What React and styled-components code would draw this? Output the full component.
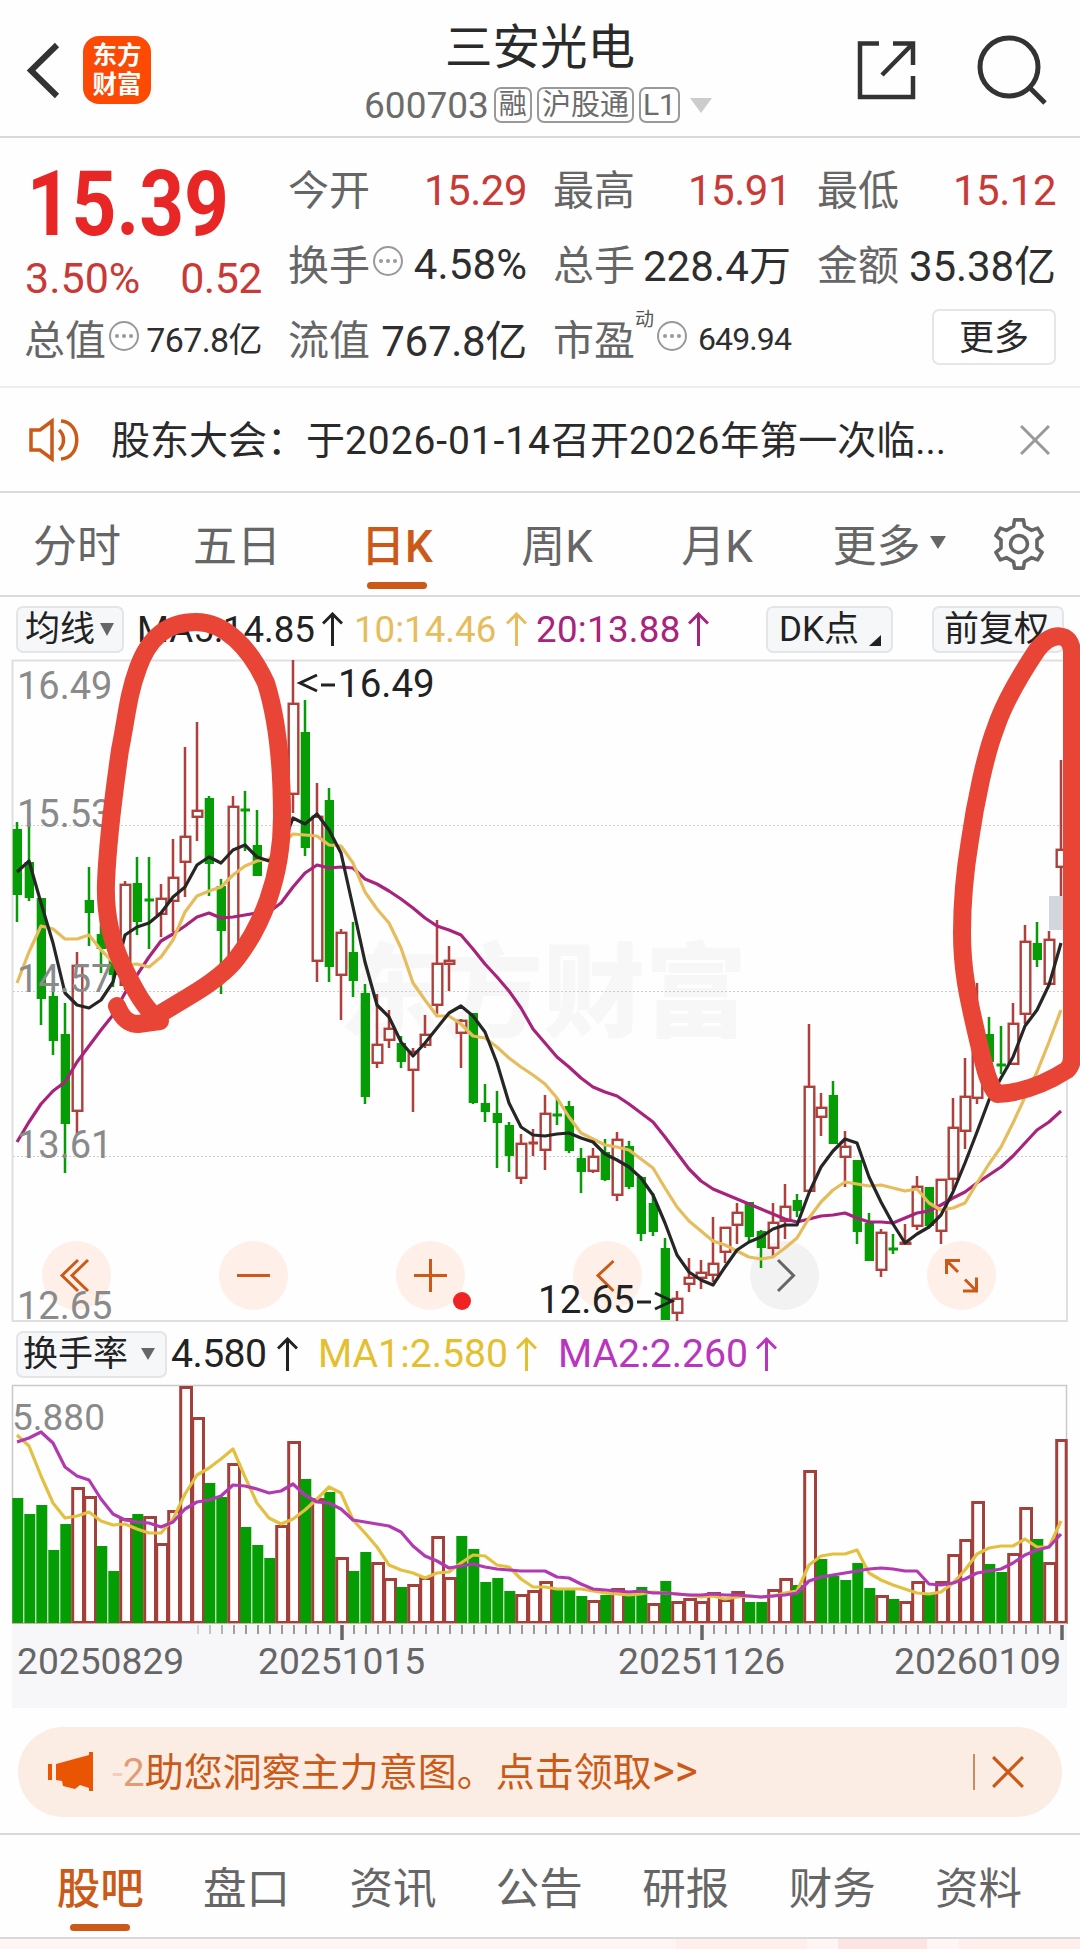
import React from "react";
import styled, { createGlobalStyle } from "styled-components";

const GlobalStyle = createGlobalStyle`
  * { box-sizing: border-box; }
  body {
    margin: 0;
    background: #fefefe;
    font-family: Roboto, "Noto Sans CJK SC", sans-serif;
    color: #2a2a2a;
  }
`;

const ORANGE = "#cb5a18";
const UP = "#ae3f3a";
const DOWN = "#069c06";

const Page = styled.div`
  position: relative;
  width: 1080px;
  height: 1949px;
  overflow: hidden;
  display: flex;
  flex-direction: column;
  white-space: nowrap;
`;

/* ---------- header ---------- */

const Header = styled.header`
  height: 138px;
  border-bottom: 2px solid #d9d9d9;
  display: grid;
  grid-template-columns: 300px 1fr 300px;
`;

const HeaderSide = styled.div`
  display: flex;
  align-items: center;
  height: 140px;
  justify-content: ${({ right }) => (right ? "flex-end" : "flex-start")};
  padding: ${({ right }) => (right ? "0 31px 0 0" : "0 0 0 25px")};
  gap: ${({ right }) => (right ? "59px" : "21px")};
`;

const Logo = styled.div`
  width: 68px;
  height: 68px;
  border-radius: 16px;
  background: #fc4a05;
  color: #fff;
  font: 700 24.5px/29px "Noto Sans CJK SC", sans-serif;
  text-align: center;
  padding-top: 3px;
`;

const TitleBlock = styled.div`
  display: flex;
  flex-direction: column;
  align-items: center;
`;

const Title = styled.h1`
  margin: 22px 0 0;
  font-size: 47.5px;
  line-height: 52px;
  font-weight: 400;
`;

const SubTitle = styled.div`
  display: flex;
  align-items: center;
  gap: 5px;
  margin: 13px 0 0 -4px;
  height: 36px;
  font-size: 37px;
  color: #6c6c6c;
`;

const Tag = styled.span`
  height: 36px;
  line-height: 32px;
  padding: 0 ${({ px }) => px || 3}px;
  border: 2px solid #999;
  border-radius: 7px;
  font-size: ${({ size }) => size || 29}px;
`;

const Triangle = styled.span`
  width: 0;
  height: 0;
  margin-left: ${({ ml }) => ml || 0}px;
  border-left: ${({ w }) => w / 2}px solid transparent;
  border-right: ${({ w }) => w / 2}px solid transparent;
  border-top: ${({ h }) => h}px solid ${({ color }) => color || "#666"};
`;

/* ---------- quote ---------- */

const Quote = styled.section`
  height: 250px;
  border-bottom: 2px solid #eee;
  display: grid;
  grid-template-columns: 237px 238px 237px 238px;
  grid-template-rows: 75px 75px 75px;
  column-gap: 27px;
  padding: 14px 0 0 25px;
`;

const PriceCell = styled.div`
  grid-row: span 2;
  color: #e82626;
`;

const Price = styled.div`
  height: 95px;
  font-size: 91px;
  line-height: 104px;
  font-weight: 700;
  padding-left: 2px;
  transform: scaleX(0.86);
  transform-origin: left;
`;

const Change = styled.div`
  display: flex;
  justify-content: space-between;
  font-size: 43px;
  line-height: 62px;
  letter-spacing: -0.5px;
  color: #c93a37;

  span:first-child { letter-spacing: 0; }
`;

const Cell = styled.div`
  display: flex;
  align-items: center;
  height: 75px;
`;

const Label = styled.span`
  font-size: 41px;
  margin: -6px 0 0 -1px;
  color: #666;
`;

const Value = styled.span`
  margin-left: auto;
  margin-top: ${({ mt }) => mt || 0}px;
  font-size: ${({ size }) => size || 41}px;
  letter-spacing: ${({ ls }) => ls || -0.5}px;
  color: ${({ up }) => (up ? "#c93a37" : "#2e2e2e")};
`;

const Dots = styled.span`
  width: 30px;
  height: 30px;
  margin: -8px 0 0 3px;
  border: 2px solid #999;
  border-radius: 50%;
  display: flex;
  align-items: center;
  justify-content: center;
  gap: 3px;

  i {
    width: 4px;
    height: 4px;
    border-radius: 50%;
    background: #999;
  }
`;

const Sup = styled.sup`
  font-size: 19px;
  line-height: 20px;
  margin-top: -40px;
  color: #555;
`;

const MoreButton = styled.button`
  margin: -6px 0 0 auto;
  width: 124px;
  height: 56px;
  border: 2px solid #e6e6e6;
  border-radius: 7px;
  background: #fff;
  font: 35px/46px "Noto Sans CJK SC", sans-serif;
  color: #2a2a2a;
  padding: 0 0 3px;
`;

/* ---------- notice + period tabs ---------- */

const Notice = styled.div`
  height: 105px;
  border-bottom: 2px solid #dcdcdc;
  display: flex;
  align-items: center;
  padding: 0 30px 0 28px;
  font-size: 39px;
`;

const NoticeText = styled.span`
  flex: 1;
  margin: -6px 0 0 30px;

  b {
    font-weight: 400;
    letter-spacing: 0.9px;
  }
`;

const Tabs = styled.nav`
  height: 104px;
  margin-left: -3px;
  border-bottom: 2px solid #dcdcdc;
  display: grid;
  grid-template-columns: repeat(5, 160px) 184px 76px;
  font-size: 44px;
  color: #666;
`;

const Tab = styled.a`
  height: 102px;
  display: flex;
  align-items: center;
  justify-content: center;
  position: relative;
  gap: 9px;
  padding-bottom: ${({ icon }) => (icon ? 0 : 3)}px;
  color: ${({ active }) => (active ? ORANGE : "#666")};
  font-weight: ${({ active }) => (active ? 500 : 400)};

  &::after {
    content: "";
    display: ${({ active }) => (active ? "block" : "none")};
    position: absolute;
    bottom: 6px;
    width: 60px;
    height: 7px;
    border-radius: 4px;
    background: ${ORANGE};
  }
`;

/* ---------- indicator rows ---------- */

const IndicatorRow = styled.div`
  height: 63px;
  display: flex;
  align-items: center;
  padding: 1px 16px 0;
  font-size: ${({ size }) => size}px;
`;

const Chip = styled.button`
  width: ${({ w }) => w}px;
  height: 47px;
  margin-left: ${({ ml }) => ml || 0}px;
  padding: 0 0 0 ${({ pl }) => pl || 8}px;
  display: flex;
  align-items: center;
  gap: 5px;
  border: 2px solid #e3e5e8;
  border-radius: 7px;
  background: #f5f7f9;
  font: 35px/43px Roboto, "Noto Sans CJK SC", sans-serif;
  color: #222;
`;

const Corner = styled.i`
  align-self: flex-end;
  margin: 0 0 5px 5px;
  border-left: 12px solid transparent;
  border-bottom: 11px solid #222;
`;

const Ma = styled.span`
  display: flex;
  align-items: center;
  width: ${({ w }) => w}px;
  margin-left: ${({ ml }) => ml}px;
  justify-content: space-between;
  letter-spacing: ${({ ls }) => ls || 0}px;
  color: ${({ color }) => color};
`;

const ChartPanel = styled.div`
  position: relative;
  height: ${({ h }) => h}px;

  > svg {
    position: relative;
    display: block;
    overflow: visible;
  }
`;

const Controls = styled.div`
  position: absolute;
  left: 42px;
  top: 581px;
  display: flex;
  gap: 108px;
`;

const Control = styled.button`
  width: 69px;
  height: 69px;
  padding: 0;
  border: 0;
  border-radius: 50%;
  background: ${({ muted }) => (muted ? "#f2f2f2" : "#fef0e9")};

  svg {
    display: block;
    fill: none;
    stroke: ${({ muted }) => (muted ? "#666" : ORANGE)};
    stroke-width: 3;
  }
`;

/* ---------- bottom ---------- */

const Promo = styled.div`
  height: 90px;
  margin: 19px 18px 16px;
  padding: 0 38px 0 30px;
  border-radius: 45px;
  background: #fcede4;
  display: flex;
  align-items: center;
  font-size: 39px;
  color: ${ORANGE};
`;

const PromoText = styled.span`
  flex: 1;
  margin: -6px 0 0 18px;

  span { opacity: 0.55; }
  span:first-child { opacity: 0.2; }

  b {
    font-weight: 400;
    font-size: 44px;
    line-height: 40px;
  }
`;

const PromoDivider = styled.i`
  width: 2px;
  height: 36px;
  margin-right: 17px;
  background: #c98a66;
`;

const BottomTabs = styled.nav`
  height: 106px;
  border-top: 2px solid #d9d9d9;
  border-bottom: 2px solid #d9d9d9;
  padding: 0 27px;
  display: grid;
  grid-template-columns: repeat(7, 146.4px);
  font-size: 43.5px;
`;

const BottomTab = styled(Tab)`
  padding-bottom: 1px;
`;

const HeatStrip = styled.div`
  height: 10px;
  display: grid;
  grid-template-columns: 676px 131px 31px 89px 32px 1fr;
  background: #fff5f4;

  i:nth-child(2), i:nth-child(6) { background: #feeeec; }
  i:nth-child(4) { background: #fbe4e1; }
`;

const Marks = styled.svg`
  position: absolute;
  left: 0;
  top: 0;
  pointer-events: none;
`;

/* ---------- data ---------- */

// [direction, high, body top, body bottom, low]
const candles = [
  ["d", 822, 829, 895, 922], ["d", 822, 862, 898, 901], ["d", 898, 898, 999, 1025], ["d", 988, 996, 1041, 1055],
  ["d", 1003, 1034, 1124, 1173], ["u", 952, 965, 1111, 1134], ["d", 867, 900, 913, 946], ["d", 917, 934, 949, 973],
  ["d", 930, 942, 975, 987], ["u", 881, 884, 985, 990], ["d", 857, 883, 922, 935], ["d", 857, 900, 901, 949],
  ["u", 884, 898, 914, 937], ["u", 839, 877, 901, 932], ["u", 747, 836, 862, 897], ["u", 722, 810, 817, 841],
  ["d", 796, 798, 864, 896], ["d", 879, 886, 931, 994], ["u", 796, 806, 960, 965], ["d", 791, 810, 811, 851],
  ["d", 810, 845, 876, 876], ["u", 885, 888, 900, 905], ["u", 800, 820, 850, 860], ["u", 660, 703, 794, 813],
  ["d", 700, 732, 848, 856], ["u", 783, 816, 961, 982], ["d", 788, 800, 967, 982], ["u", 929, 932, 975, 1020],
  ["d", 922, 952, 981, 997], ["d", 984, 993, 1097, 1104], ["u", 994, 1044, 1063, 1068], ["u", 1010, 1028, 1040, 1048],
  ["d", 1036, 1043, 1062, 1068], ["u", 1048, 1051, 1070, 1112], ["u", 1015, 1034, 1045, 1048], ["u", 920, 963, 1005, 1014],
  ["u", 946, 960, 964, 991], ["u", 1019, 1020, 1033, 1068], ["d", 1013, 1013, 1103, 1104], ["d", 1084, 1103, 1112, 1122],
  ["d", 1091, 1113, 1123, 1168], ["d", 1122, 1125, 1156, 1172], ["u", 1134, 1143, 1178, 1184], ["u", 1129, 1143, 1144, 1156],
  ["u", 1095, 1113, 1150, 1170], ["d", 1098, 1115, 1116, 1125], ["d", 1101, 1106, 1151, 1153], ["d", 1148, 1158, 1172, 1193],
  ["u", 1148, 1156, 1171, 1173], ["d", 1139, 1152, 1180, 1181], ["u", 1132, 1139, 1195, 1201], ["d", 1141, 1146, 1187, 1189],
  ["d", 1176, 1177, 1234, 1241], ["d", 1193, 1203, 1232, 1236], ["d", 1238, 1248, 1320, 1320], ["u", 1291, 1298, 1313, 1321],
  ["u", 1258, 1277, 1284, 1292], ["u", 1260, 1272, 1278, 1289], ["u", 1217, 1263, 1275, 1282], ["u", 1227, 1227, 1252, 1263],
  ["u", 1203, 1212, 1225, 1244], ["d", 1202, 1202, 1237, 1241], ["d", 1230, 1231, 1248, 1268], ["u", 1203, 1222, 1248, 1257],
  ["u", 1184, 1206, 1221, 1239], ["d", 1194, 1200, 1211, 1217], ["u", 1024, 1086, 1191, 1191], ["u", 1093, 1107, 1117, 1136],
  ["d", 1081, 1095, 1144, 1144], ["u", 1131, 1146, 1157, 1187], ["d", 1160, 1160, 1232, 1244], ["d", 1213, 1223, 1261, 1261],
  ["u", 1229, 1232, 1270, 1277], ["d", 1234, 1249, 1250, 1254], ["u", 1224, 1242, 1244, 1245], ["u", 1176, 1186, 1226, 1230],
  ["d", 1187, 1187, 1226, 1226], ["u", 1179, 1179, 1231, 1244], ["u", 1098, 1127, 1179, 1190], ["u", 1058, 1096, 1131, 1149],
  ["u", 983, 1040, 1098, 1104], ["d", 1017, 1034, 1062, 1064], ["d", 1026, 1065, 1066, 1074], ["u", 1003, 1023, 1064, 1064],
  ["u", 925, 941, 1014, 1024], ["d", 922, 943, 960, 967], ["u", 931, 939, 984, 985], ["u", 760, 849, 867, 896],
];

const ma5 = [
  872, 861, 903, 943, 993, 1005, 1008, 1000, 982, 935, 927, 923, 913, 897, 887, 865, 857, 863, 850, 845, 857, 861,
  850, 818, 824, 814, 830, 853, 907, 962, 1005, 1017, 1042, 1056, 1043, 1028, 1013, 1006, 1016, 1032, 1063, 1103,
  1127, 1135, 1136, 1134, 1133, 1138, 1142, 1154, 1160, 1167, 1178, 1195, 1223, 1255, 1272, 1280, 1285, 1267, 1250,
  1242, 1237, 1229, 1225, 1225, 1193, 1167, 1151, 1139, 1143, 1177, 1202, 1224, 1243, 1234, 1227, 1215, 1192, 1163,
  1132, 1100, 1078, 1057, 1026, 1010, 985, 943,
];

const ma10 = [
  983, 952, 926, 929, 939, 939, 935, 950, 962, 965, 964, 967, 957, 940, 912, 896, 891, 887, 875, 866, 861, 859, 845,
  834, 835, 836, 845, 846, 863, 892, 909, 923, 948, 983, 1000, 1016, 1016, 1024, 1036, 1038, 1047, 1058, 1067, 1075,
  1084, 1098, 1117, 1133, 1139, 1145, 1147, 1150, 1159, 1168, 1188, 1207, 1221, 1231, 1241, 1245, 1251, 1257, 1259,
  1257, 1248, 1238, 1218, 1202, 1190, 1182, 1184, 1186, 1185, 1188, 1191, 1189, 1203, 1210, 1208, 1203, 1183, 1164,
  1147, 1123, 1097, 1072, 1042, 1010,
];

const ma20 = [
  1142, 1122, 1104, 1091, 1082, 1062, 1046, 1030, 1015, 993, 975, 957, 941, 934, 926, 917, 913, 918, 917, 915, 913,
  912, 903, 887, 873, 865, 868, 867, 868, 879, 884, 891, 899, 908, 918, 926, 930, 935, 949, 964, 977, 991, 1008, 1029,
  1043, 1057, 1067, 1078, 1087, 1092, 1096, 1104, 1113, 1122, 1137, 1153, 1169, 1181, 1189, 1194, 1199, 1204, 1209,
  1214, 1219, 1222, 1219, 1216, 1215, 1213, 1218, 1222, 1222, 1223, 1218, 1213, 1211, 1205, 1198, 1192, 1183, 1175,
  1167, 1156, 1143, 1130, 1122, 1111,
];

// tops of the turnover bars; direction differs from the candle on a few days
const bars =
  "d1498 d1514 d1505 d1550 d1524 u1487 u1496 d1546 d1571 u1518 d1514 u1516 u1543 u1510 u1386 u1417 d1483 d1497 u1463 d1527 d1545 d1558 u1525 u1441 d1479 u1498 d1492 u1557 d1571 d1552 u1562 u1578 d1587 u1584 u1577 u1536 u1577 d1536 d1549 d1582 d1578 d1591 u1594 u1590 u1581 d1589 d1589 d1596 u1600 d1595 u1588 d1596 d1587 u1603 d1581 u1601 u1598 u1601 u1592 u1599 u1591 d1602 d1602 u1589 u1578 d1585 u1470 d1559 d1576 d1580 d1563 d1588 u1595 d1599 u1601 u1581 d1594 u1581 u1554 u1539 u1501 d1564 d1572 u1553 u1507 d1539 u1562 u1439"
    .split(" ")
    .map((s) => [s[0], Number(s.slice(1))]);

const volMa1 = [
  1435, 1446, 1476, 1503, 1518, 1516, 1512, 1521, 1525, 1524, 1529, 1533, 1533, 1519, 1494, 1475, 1468, 1459, 1449,
  1477, 1503, 1518, 1524, 1519, 1510, 1499, 1487, 1493, 1520, 1533, 1547, 1565, 1570, 1573, 1578, 1573, 1572, 1563,
  1555, 1556, 1565, 1567, 1579, 1587, 1587, 1589, 1589, 1589, 1591, 1593, 1594, 1595, 1594, 1592, 1593, 1594, 1595,
  1597, 1596, 1599, 1597, 1596, 1597, 1596, 1593, 1591, 1565, 1556, 1554, 1554, 1550, 1573, 1580, 1585, 1589, 1593,
  1594, 1592, 1583, 1570, 1554, 1548, 1546, 1546, 1539, 1547, 1547, 1521,
];

const volMa2 = [
  1442, 1438, 1432, 1443, 1467, 1476, 1480, 1499, 1514, 1520, 1522, 1523, 1527, 1522, 1509, 1502, 1500, 1496, 1485,
  1486, 1489, 1493, 1491, 1484, 1495, 1502, 1503, 1509, 1520, 1522, 1524, 1526, 1532, 1546, 1556, 1561, 1568, 1566,
  1564, 1567, 1569, 1570, 1571, 1571, 1571, 1577, 1578, 1584, 1589, 1590, 1591, 1592, 1591, 1593, 1593, 1594, 1595,
  1595, 1594, 1595, 1595, 1596, 1597, 1596, 1595, 1593, 1581, 1577, 1575, 1573, 1571, 1569, 1568, 1569, 1571, 1571,
  1584, 1585, 1583, 1579, 1573, 1571, 1569, 1563, 1555, 1550, 1547, 1534,
];

const xAt = (i) => 17 + i * 12;
const toPoints = (ys) => ys.map((y, i) => `${xAt(i)},${y}`).join(" ");

/* ---------- small drawings ---------- */

const ArrowUp = () => (
  <svg width="21" height="34" viewBox="0 0 21 34" fill="none" stroke="currentColor" strokeWidth="3">
    <path d="M10.5 34V2M1 11.5L10.5 2L20 11.5" />
  </svg>
);

const Close = ({ size, color }) => (
  <svg width={size} height={size} viewBox="0 0 30 30" fill="none" stroke={color} strokeWidth="3">
    <path d="M1 1L29 29M29 1L1 29" />
  </svg>
);

const Info = () => (
  <Dots>
    <i />
    <i />
    <i />
  </Dots>
);

const Line = ({ data, color, width = 3.2 }) => (
  <polyline points={toPoints(data)} fill="none" stroke={color} strokeWidth={width} strokeLinejoin="round" />
);

const Candle = ({ x, data }) => {
  const [dir, high, top, bottom, low] = data;
  const color = dir === "u" ? UP : DOWN;
  const h = bottom - top;
  return (
    <g stroke={color} strokeWidth="2.5" fill="none">
      <path d={`M${x} ${high}V${top}M${x} ${bottom}V${low}`} />
      {h < 2 && <path d={`M${x - 4.5} ${top}H${x + 5}`} strokeWidth="3" />}
      {h >= 2 && dir === "u" && <rect x={x - 4.3} y={top + 0.8} width="9.6" height={Math.max(h - 1, 1)} strokeWidth="2.4" />}
      {h >= 2 && dir === "d" && <rect x={x - 4.3} y={top} width="9.3" height={h} fill={color} stroke="none" />}
    </g>
  );
};

const gear = () => {
  // six wide teeth, one pointing straight up
  const pts = [];
  for (let k = 0; k < 6; k++) {
    const a = (k * Math.PI) / 3 - Math.PI / 2;
    [[-0.3, 18.5], [-0.18, 24.5], [0.18, 24.5], [0.3, 18.5]].forEach(([d, r]) => {
      pts.push(`${(27 + r * Math.cos(a + d)).toFixed(1)},${(27 + r * Math.sin(a + d)).toFixed(1)}`);
    });
  }
  return pts.join(" ");
};

const PriceChart = () => (
  <svg width="1080" height="662" viewBox="0 660 1080 662">
    <path d="M12.5 1321V660.5H1067V1321Z" fill="none" stroke="#dfdfdf" strokeWidth="2" />
    {[825.5, 991.5, 1156.5].map((y) => (
      <path key={y} d={`M13 ${y}H1067`} stroke="#ccc" strokeWidth="1" strokeDasharray="2 2" />
    ))}
    <rect x="1049" y="896" width="14" height="34" fill="#d3d6dc" />
    {candles.map((c, i) => (
      <Candle key={i} x={xAt(i)} data={c} />
    ))}
    <Line data={ma20} color="#a8237b" />
    <Line data={ma10} color="#e6bc5c" />
    <Line data={ma5} color="#262626" />
    <g fontSize="38" fill="#8a8a8a">
      <text x="17" y="699">16.49</text>
      <text x="17" y="827">15.53</text>
      <text x="17" y="992">14.57</text>
      <text x="17" y="1158">13.61</text>
      <text x="17" y="1319">12.65</text>
    </g>
    <g fontSize="38.5" fill="#222">
      <text x="338" y="697">16.49</text>
      <text x="538" y="1313">12.65</text>
    </g>
    <path d="M317 675L300 683L317 691M321 685H335M637 1302H651M655 1293L672 1301L655 1309" fill="none" stroke="#222" strokeWidth="3" />
  </svg>
);

const TurnoverChart = () => (
  <svg width="1080" height="323" viewBox="0 1385 1080 323">
    <path d="M12 1624H1067V1708H12Z" fill="#f7f7fa" />
    <path d="M12.5 1623V1385.5H1066.5V1623" fill="none" stroke="#c9c9c9" strokeWidth="1.5" />
    {bars.map(([dir, top], i) =>
      dir === "u" ? (
        <rect key={i} x={xAt(i) - 4.3} y={top + 1.5} width={i === 87 ? 9.5 : 10.8} height={1621 - top} fill="#fefefe" stroke="#a2403c" strokeWidth="3" />
      ) : (
        <rect key={i} x={xAt(i) - 4.7} y={top} width="11" height={1623 - top} fill="#049d04" />
      )
    )}
    <path d="M12 1623.5H1067" stroke="#dba9a4" strokeWidth="1" />
    <Line data={volMa1} color="#e4c040" />
    <Line data={volMa2} color="#b13ab2" />
    {bars.map((_, i) => {
      const major = i === 27 || i === 57 || i === 87;
      if (i < 15) return null;
      return (
        <path
          key={i}
          d={`M${xAt(i) + 1} 1625V${major ? 1640 : 1634}`}
          stroke={major ? "#666" : "#999"}
          strokeWidth={major ? 3.5 : 2}
          opacity={i < 19 ? (i - 13) * 0.18 : 1}
        />
      );
    })}
    <text x="12" y="1430" fontSize="37" fill="#8a8a8a">5.880</text>
    <g fontSize="37.2" fill="#666">
      <text x="17" y="1674">20250829</text>
      <text x="258" y="1674">20251015</text>
      <text x="618" y="1674">20251126</text>
      <text x="894" y="1674">20260109</text>
    </g>
  </svg>
);

const Watermark = styled.div`
  position: absolute;
  left: 339px;
  top: 265px;
  font: 900 102px/120px "Noto Sans CJK SC", sans-serif;
  color: #f7f7f7;
`;

const AlertDot = styled.i`
  position: absolute;
  left: 453px;
  top: 632px;
  width: 18px;
  height: 18px;
  border-radius: 50%;
  background: #f02323;
`;

const App = () => {
  const bottomTabs = ["股吧", "盘口", "资讯", "公告", "研报", "财务", "资料"];

  return (
    <Page>
      <GlobalStyle />
      <Header>
        <HeaderSide>
          <svg width="37" height="60" viewBox="0 0 37 60" fill="none" stroke="#333" strokeWidth="6">
            <path d="M32 5L6 30.500L32 56" />
          </svg>
          <Logo>
            东方
            <br />
            财富
          </Logo>
        </HeaderSide>
        <TitleBlock>
          <Title>三安光电</Title>
          <SubTitle>
            600703
            <Tag size={28}>融</Tag>
            <Tag>沪股通</Tag>
            <Tag size={30} px={2}>L1</Tag>
            <Triangle w={22} h={15} ml={5} color="#ccc" />
          </SubTitle>
        </TitleBlock>
        <HeaderSide right>
          <svg width="64" height="64" viewBox="0 0 64 64" fill="none" stroke="#333" strokeWidth="4.500">
            <path d="M25 5.500H6V59H59V38M39 5.500H59V27M59 5.500L28 37" />
          </svg>
          <svg width="72" height="72" viewBox="0 0 72 72" fill="none" stroke="#333" strokeWidth="5">
            <circle cx="32" cy="33" r="29" />
            <path d="M53 54L68 69" />
          </svg>
        </HeaderSide>
      </Header>

      <Quote>
        <PriceCell>
          <Price>15.39</Price>
          <Change>
            <span>3.50%</span>
            <span>0.52</span>
          </Change>
        </PriceCell>
        <Cell><Label>今开</Label><Value up size={42} mt={2}>15.29</Value></Cell>
        <Cell><Label>最高</Label><Value up size={42} mt={2}>15.91</Value></Cell>
        <Cell><Label>最低</Label><Value up size={42} mt={2}>15.12</Value></Cell>
        <Cell><Label>换手</Label><Info /><Value size={42} ls={0.1}>4.58%</Value></Cell>
        <Cell><Label>总手</Label><Value size={42} ls={0.1} mt={-5}>228.4万</Value></Cell>
        <Cell><Label>金额</Label><Value size={42} ls={-0.1} mt={-5}>35.38亿</Value></Cell>
        <Cell><Label>总值</Label><Info /><Value size={34} ls={-0.6} mt={-4}>767.8亿</Value></Cell>
        <Cell><Label>流值</Label><Value size={42} ls={-0.3} mt={-5}>767.8亿</Value></Cell>
        <Cell><Label>市盈</Label><Sup>动</Sup><Info /><Value size={32} ls={-0.9} mt={-1}>649.94</Value></Cell>
        <Cell><MoreButton>更多</MoreButton></Cell>
      </Quote>

      <Notice>
        <svg width="53" height="44" viewBox="0 0 53 44" fill="none" stroke={ORANGE} strokeWidth="3.500">
          <path d="M3 12H12L24 3V41L12 32H3Z" />
          <path d="M31 12C37 17 37 27 31 32M33 3C54 4 54 40 33 41" />
        </svg>
        <NoticeText>股东大会：于<b>2026-01-14</b>召开<b>2026</b>年第一次临...</NoticeText>
        <Close size={30} color="#999" />
      </Notice>

      <Tabs>
        <Tab>分时</Tab>
        <Tab>五日</Tab>
        <Tab active>日K</Tab>
        <Tab>周K</Tab>
        <Tab>月K</Tab>
        <Tab>
          更多
          <Triangle w={16} h={13} />
        </Tab>
        <Tab icon>
          <svg width="54" height="54" viewBox="0 0 54 54" fill="none" stroke="#666" strokeWidth="3.600" strokeLinejoin="round">
            <polygon points={gear()} />
            <circle cx="27" cy="27" r="8.500" />
          </svg>
        </Tab>
      </Tabs>

      <IndicatorRow size={36.7}>
        <Chip w={108} pl={7}>均线<Triangle w={14} h={13} /></Chip>
        <Ma ml={13} w={206} color="#222">MA5:14.85<ArrowUp /></Ma>
        <Ma ml={11} w={173} color="#e6bc5c">10:14.46<ArrowUp /></Ma>
        <Ma ml={9} w={173} ls={0.3} color="#a8237b">20:13.88<ArrowUp /></Ma>
        <Chip w={127} ml={57} pl={11}>DK点<Corner /></Chip>
        <Chip w={132} ml={39} pl={10}>前复权</Chip>
      </IndicatorRow>

      <ChartPanel h={662}>
        <Watermark>东方财富</Watermark>
        <Controls>
          <Control>
            <svg width="69" height="69" viewBox="0 0 69 69"><path d="M36 19L20 34.500L36 50M46 19L30 34.500L46 50" /></svg>
          </Control>
          <Control>
            <svg width="69" height="69" viewBox="0 0 69 69"><path d="M18 34.500H51" /></svg>
          </Control>
          <Control>
            <svg width="69" height="69" viewBox="0 0 69 69"><path d="M18 34.500H51M34.500 18V51" /></svg>
          </Control>
          <Control>
            <svg width="69" height="69" viewBox="0 0 69 69"><path d="M40.500 20L25 34.500L40.500 50" /></svg>
          </Control>
          <Control muted>
            <svg width="69" height="69" viewBox="0 0 69 69"><path d="M28 19L43.500 34.500L28 50" /></svg>
          </Control>
          <Control>
            <svg width="69" height="69" viewBox="0 0 69 69"><path d="M33 19.500H19.500V33M19.500 19.500L31 31M36 50H49.500V36.500M49.500 50L38 38.500" /></svg>
          </Control>
        </Controls>
        <AlertDot />
        <PriceChart />
      </ChartPanel>

      <IndicatorRow size={39.2}>
        <Chip w={151} pl={5}>换手率<Triangle w={15} h={12} ml={8} /></Chip>
        <Ma ml={4} w={127} ls={-0.6} color="#222">4.580<ArrowUp /></Ma>
        <Ma ml={20} w={219} color="#e4c030">MA1:2.580<ArrowUp /></Ma>
        <Ma ml={21} w={219} color="#b935bd">MA2:2.260<ArrowUp /></Ma>
      </IndicatorRow>

      <ChartPanel h={323}>
        <TurnoverChart />
      </ChartPanel>

      <Promo>
        <svg width="46" height="40" viewBox="0 0 46 40" fill="#ea5504">
          <path d="M0 12H4V28H0ZM8 12L41 3V0H45V39H41V36L32 33L27 37L15 34L14 29L8 28Z" />
        </svg>
        <PromoText>
          <span>-</span>
          <span>2</span>助您洞察主力意图。点击领取<b>&gt;&gt;</b>
        </PromoText>
        <PromoDivider />
        <Close size={32} color={ORANGE} />
      </Promo>

      <BottomTabs>
        {bottomTabs.map((name, i) => (
          <BottomTab key={name} active={i === 0}>{name}</BottomTab>
        ))}
      </BottomTabs>

      <HeatStrip>
        {[0, 1, 2, 3, 4, 5].map((n) => <i key={n} />)}
      </HeatStrip>

      {/* hand-drawn circles */}
      <Marks width="1080" height="1949" fill="none" stroke="#e84536" strokeWidth="18" strokeLinecap="round" strokeLinejoin="round">
        <path d="M117 1006C122 1018 128 1024 138 1024L160 1021C145 1009 136 993 122 964C110 938 105 910 106 883C107 855 110 820 120 750C127 715 128 695 138 668C148 640 165 622 196 622C225 622 250 648 266 683C276 715 282 760 282 817C282 880 260 928 237 958C225 974 205 987 188 997L150 1020" />
        <path d="M1072 1057V652C1071 632 1052 631 1037 650C1027 665 1005 700 996 727C985 755 975 805 970 840C965 870 962 905 962 933C962 975 970 1005 978 1040C984 1065 988 1085 997 1094C1020 1093 1045 1084 1067 1070Q1072 1065 1072 1057" />
      </Marks>
    </Page>
  );
};

export default App;
